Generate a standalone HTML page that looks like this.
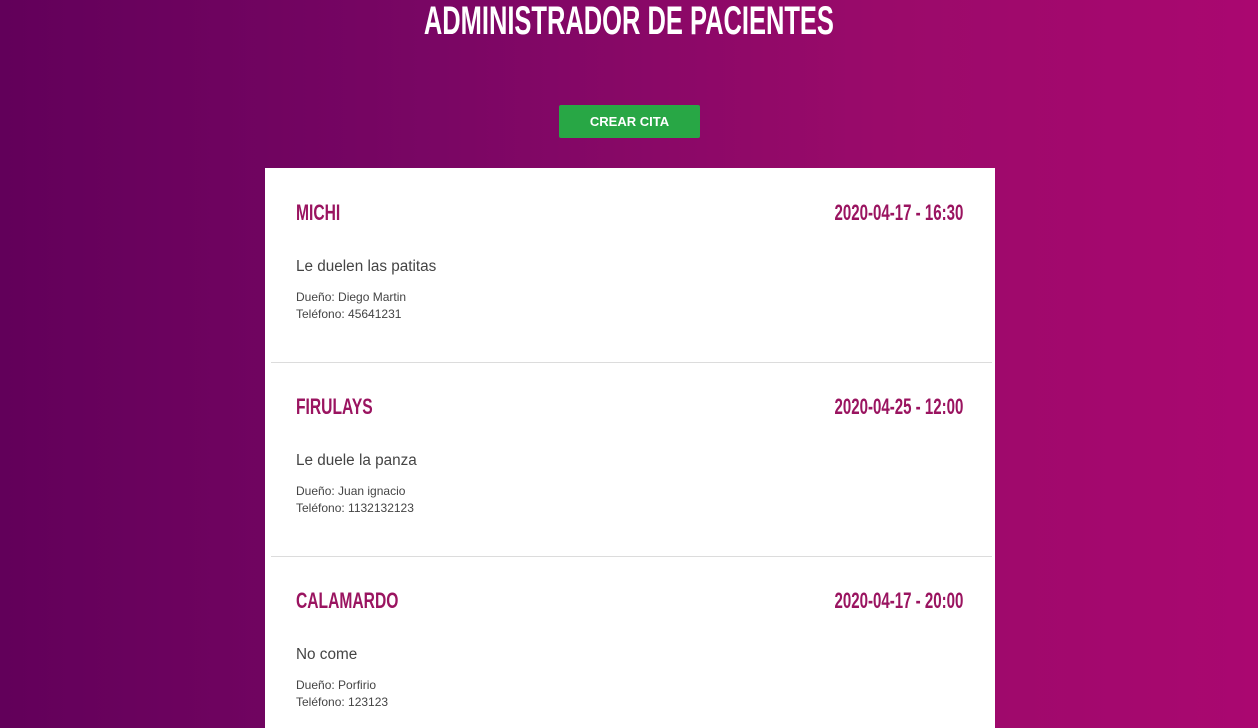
<!DOCTYPE html>
<html><head><meta charset="utf-8"><style>
*{margin:0;padding:0;box-sizing:border-box}
body{width:1258px;height:718px;overflow:hidden;position:relative;background:linear-gradient(90deg,#62005a 0%,#7a0664 35%,#9a0a6a 70%,#aa0770 100%);font-family:"Liberation Sans",sans-serif}
.abs{position:absolute;white-space:nowrap}
.title{left:0;width:1258px;top:1px;text-align:center;color:#fff;font-weight:bold;font-size:40px;line-height:40px}
.title span{display:inline-block;transform:scaleX(0.637);transform-origin:center}
.btn{left:559px;top:105px;width:141px;height:33px;background:#28a745;border-radius:2px;color:#fff;font-weight:bold;font-size:13px;line-height:33px;text-align:center}
.card{left:265px;top:168px;width:730px;height:560px;background:#fff}
.sep{position:absolute;left:271px;width:721px;height:1px;background:#dcdcdc}
.name{left:296px;color:#9a1460;font-weight:bold;font-size:22px;line-height:22px;transform:scaleX(0.71);transform-origin:left}
.date{right:295px;color:#9a1460;font-weight:bold;font-size:22px;line-height:22px;transform:scaleX(0.684);transform-origin:right}
.desc{left:296px;color:#444;font-size:15.3px;line-height:18px}
.own{left:296px;color:#444;font-size:12px;line-height:17px}
</style></head><body>
<div class="abs title"><span>ADMINISTRADOR DE PACIENTES</span></div>
<div class="abs btn">CREAR CITA</div>
<div class="abs card"></div>
<div class="sep" style="top:362px"></div>
<div class="sep" style="top:556px"></div>

<div class="abs name" style="top:202px">MICHI</div>
<div class="abs date" style="top:202px">2020-04-17 - 16:30</div>
<div class="abs desc" style="top:258px">Le duelen las patitas</div>
<div class="abs own" style="top:289px">Dueño: Diego Martin<br>Teléfono: 45641231</div>

<div class="abs name" style="top:396px">FIRULAYS</div>
<div class="abs date" style="top:396px">2020-04-25 - 12:00</div>
<div class="abs desc" style="top:452px">Le duele la panza</div>
<div class="abs own" style="top:483px">Dueño: Juan ignacio<br>Teléfono: 1132132123</div>

<div class="abs name" style="top:590px">CALAMARDO</div>
<div class="abs date" style="top:590px">2020-04-17 - 20:00</div>
<div class="abs desc" style="top:646px">No come</div>
<div class="abs own" style="top:677px">Dueño: Porfirio<br>Teléfono: 123123</div>
</body></html>
